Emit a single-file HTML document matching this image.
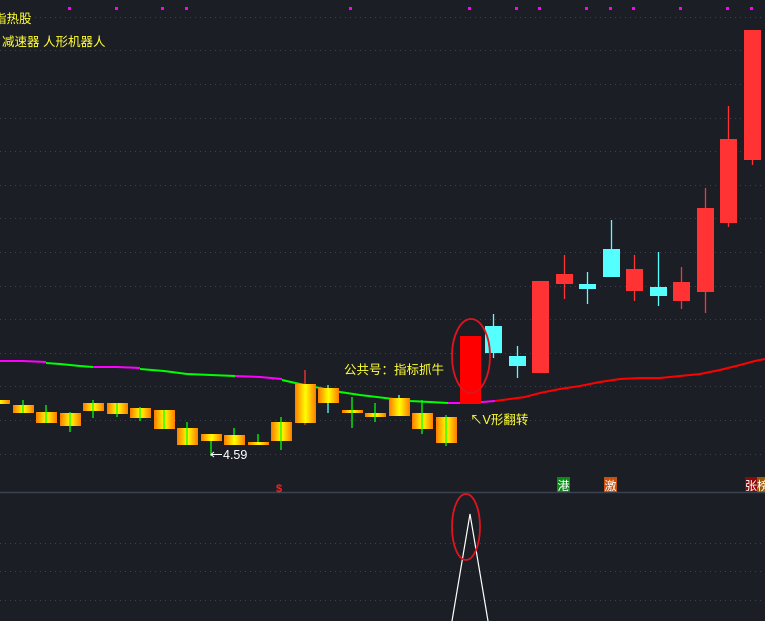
<!DOCTYPE html>
<html><head><meta charset="utf-8"><style>
html,body{margin:0;padding:0;background:#1c1e26;width:765px;height:621px;overflow:hidden}
svg{display:block}
text{font-family:"Liberation Sans","Noto Sans CJK SC",sans-serif}
</style></head><body>
<svg width="765" height="621" viewBox="0 0 765 621" xmlns="http://www.w3.org/2000/svg">
<defs>
<linearGradient id="og" x1="0" x2="1" y1="0" y2="0">
<stop offset="0" stop-color="#ff7a00"/><stop offset="0.5" stop-color="#ffff00"/><stop offset="1" stop-color="#ff7a00"/>
</linearGradient>
</defs>
<rect width="765" height="621" fill="#1c1e26"/>
<g stroke="#3c414c" stroke-width="1" stroke-dasharray="1,4">
<line x1="0" y1="17.5" x2="765" y2="17.5"/><line x1="0" y1="50.5" x2="765" y2="50.5"/>
<line x1="0" y1="84.5" x2="765" y2="84.5"/><line x1="0" y1="118.5" x2="765" y2="118.5"/>
<line x1="0" y1="151.5" x2="765" y2="151.5"/><line x1="0" y1="185.5" x2="765" y2="185.5"/>
<line x1="0" y1="218.5" x2="765" y2="218.5"/><line x1="0" y1="252.5" x2="765" y2="252.5"/>
<line x1="0" y1="286.5" x2="765" y2="286.5"/><line x1="0" y1="319.5" x2="765" y2="319.5"/>
<line x1="0" y1="353.5" x2="765" y2="353.5"/><line x1="0" y1="386.5" x2="765" y2="386.5"/>
<line x1="0" y1="420.5" x2="765" y2="420.5"/><line x1="0" y1="454.5" x2="765" y2="454.5"/>
<line x1="0" y1="543.5" x2="765" y2="543.5"/><line x1="0" y1="571.5" x2="765" y2="571.5"/>
<line x1="0" y1="600.5" x2="765" y2="600.5"/>
</g>
<line x1="0" y1="492.5" x2="765" y2="492.5" stroke="#3a4250" stroke-width="1.5"/>
<g fill="#ff00ff">
<rect x="68" y="7" width="3" height="3"/><rect x="115" y="7" width="3" height="3"/><rect x="161" y="7" width="3" height="3"/><rect x="185" y="7" width="3" height="3"/><rect x="349" y="7" width="3" height="3"/><rect x="468" y="7" width="3" height="3"/><rect x="515" y="7" width="3" height="3"/><rect x="538" y="7" width="3" height="3"/><rect x="585" y="7" width="3" height="3"/><rect x="609" y="7" width="3" height="3"/><rect x="632" y="7" width="3" height="3"/><rect x="679" y="7" width="3" height="3"/><rect x="726" y="7" width="3" height="3"/><rect x="750" y="7" width="3" height="3"/>
</g>
<text x="-6" y="23" font-size="12.5" fill="#ffff33">指热股</text>
<text x="2" y="46" font-size="12.5" fill="#ffff33">减速器 人形机器人</text>
<polyline fill="none" stroke="#ff00ff" stroke-width="2" points="0,361 23,361 46,362"/>
<polyline fill="none" stroke="#00ff00" stroke-width="2" points="46,363 60,364 70,365 80,366 93,367"/>
<polyline fill="none" stroke="#ff00ff" stroke-width="2" points="93,367 117,367 140,368"/>
<polyline fill="none" stroke="#00ff00" stroke-width="2" points="140,369 164,371 187,374 211,375 235,376"/>
<polyline fill="none" stroke="#ff00ff" stroke-width="2" points="235,376 260,377 282,379"/>
<polyline fill="none" stroke="#00ff00" stroke-width="2" points="282,380 300,384 320,388 340,392 360,395 385,398 410,401 430,402 448,403"/>
<polyline fill="none" stroke="#ff00ff" stroke-width="2" points="448,403 470,403 495,401"/>
<polyline fill="none" stroke="#ff0000" stroke-width="2" points="495,401 510,399 525,397 540,393 560,389 580,386 600,382 620,379 640,378 660,378 680,376 700,374 720,370 740,365 755,361 765,359"/>
<g stroke="#00ff00" stroke-width="1.3">
<line x1="46" y1="405" x2="46" y2="423"/><line x1="70" y1="412" x2="70" y2="432"/><line x1="93" y1="400" x2="93" y2="418"/><line x1="117" y1="403" x2="117" y2="417"/><line x1="140" y1="407" x2="140" y2="421"/><line x1="164" y1="410" x2="164" y2="429"/><line x1="187" y1="422" x2="187" y2="445"/><line x1="211" y1="434" x2="211" y2="456"/><line x1="234" y1="428" x2="234" y2="445"/><line x1="258" y1="434" x2="258" y2="445"/><line x1="281" y1="417" x2="281" y2="450"/><line x1="352" y1="397" x2="352" y2="428"/><line x1="375" y1="403" x2="375" y2="422"/><line x1="422" y1="400" x2="422" y2="434"/><line x1="446" y1="415" x2="446" y2="446"/><line x1="23" y1="400" x2="23" y2="413"/>
</g>
<line x1="305" y1="370" x2="305" y2="425" stroke="#ff3333" stroke-width="1.3"/>
<line x1="328" y1="385" x2="328" y2="413" stroke="#55ffff" stroke-width="1.3"/>
<line x1="399" y1="395" x2="399" y2="416" stroke="#55ffff" stroke-width="1.3"/>
<g fill="url(#og)">
<rect x="-11" y="400" width="21" height="4"/>
<rect x="13" y="405" width="21" height="8"/>
<rect x="36" y="412" width="21" height="11"/>
<rect x="60" y="413" width="21" height="13"/>
<rect x="83" y="403" width="21" height="8"/>
<rect x="107" y="403" width="21" height="11"/>
<rect x="130" y="408" width="21" height="10"/>
<rect x="154" y="410" width="21" height="19"/>
<rect x="177" y="428" width="21" height="17"/>
<rect x="201" y="434" width="21" height="7"/>
<rect x="224" y="435" width="21" height="10"/>
<rect x="248" y="442" width="21" height="3"/>
<rect x="271" y="422" width="21" height="19"/>
<rect x="295" y="384" width="21" height="39"/>
<rect x="318" y="388" width="21" height="15"/>
<rect x="342" y="410" width="21" height="3"/>
<rect x="365" y="413" width="21" height="4"/>
<rect x="389" y="398" width="21" height="18"/>
<rect x="412" y="413" width="21" height="16"/>
<rect x="436" y="417" width="21" height="26"/>
</g>
<g stroke="#00ff00" stroke-width="1.3">
<line x1="23" y1="405" x2="23" y2="413"/><line x1="46" y1="412" x2="46" y2="423"/><line x1="70" y1="413" x2="70" y2="426"/><line x1="93" y1="403" x2="93" y2="411"/><line x1="117" y1="403" x2="117" y2="414"/><line x1="140" y1="408" x2="140" y2="418"/><line x1="164" y1="410" x2="164" y2="429"/><line x1="187" y1="428" x2="187" y2="445"/><line x1="281" y1="422" x2="281" y2="441"/><line x1="422" y1="413" x2="422" y2="429"/><line x1="446" y1="417" x2="446" y2="443"/><line x1="352" y1="410" x2="352" y2="413"/><line x1="375" y1="413" x2="375" y2="417"/>
</g>
<rect x="460" y="336" width="21" height="68" fill="#ff0000"/>
<g stroke="#55ffff" stroke-width="1.3">
<line x1="493.5" y1="314" x2="493.5" y2="358"/><line x1="517.5" y1="346" x2="517.5" y2="378"/><line x1="587.5" y1="272" x2="587.5" y2="304"/><line x1="611.5" y1="220" x2="611.5" y2="277"/><line x1="658.5" y1="252" x2="658.5" y2="306"/>
</g>
<g stroke="#ff3333" stroke-width="1.3">
<line x1="564.5" y1="255" x2="564.5" y2="299"/><line x1="634.5" y1="255" x2="634.5" y2="301"/><line x1="681.5" y1="267" x2="681.5" y2="309"/><line x1="705.5" y1="188" x2="705.5" y2="313"/><line x1="728.5" y1="106" x2="728.5" y2="227"/><line x1="752.5" y1="30" x2="752.5" y2="165"/>
</g>
<g fill="#55ffff">
<rect x="485" y="326" width="17" height="27"/><rect x="509" y="356" width="17" height="10"/><rect x="579" y="284" width="17" height="5"/><rect x="603" y="249" width="17" height="28"/><rect x="650" y="287" width="17" height="9"/>
</g>
<g fill="#ff3333">
<rect x="532" y="281" width="17" height="92"/><rect x="556" y="274" width="17" height="10"/><rect x="626" y="269" width="17" height="22"/><rect x="673" y="282" width="17" height="19"/><rect x="697" y="208" width="17" height="84"/><rect x="720" y="139" width="17" height="84"/><rect x="744" y="30" width="17" height="130"/>
</g>
<ellipse cx="471" cy="356" rx="19" ry="37" fill="none" stroke="#e0141e" stroke-width="1.8"/>
<text x="344" y="374" font-size="12.5" fill="#ffff33">公共号：指标抓牛</text>
<text x="470" y="424" font-size="12.5" fill="#ffff33">↖V形翻转</text>
<line x1="211" y1="454.5" x2="222" y2="454.5" stroke="#fff" stroke-width="1"/>
<path d="M214,452 L211,454.5 L214,457" fill="none" stroke="#fff" stroke-width="1"/>
<text x="223" y="459" font-size="12.5" fill="#ffffff">4.59</text>
<text x="276" y="492" font-size="11" fill="#ff2020" font-weight="bold">$</text>
<rect x="557" y="477" width="13" height="15" fill="#0a8a14"/><text x="557.5" y="490" font-size="12" fill="#fff">港</text>
<rect x="604" y="477" width="13" height="15" fill="#c8500a"/><text x="604.5" y="490" font-size="12" fill="#fff">激</text>
<rect x="745" y="477" width="12" height="15" fill="#8a0a0a"/><text x="745" y="490" font-size="12" fill="#fff">张</text>
<rect x="757" y="477" width="8" height="15" fill="#9a5a0a"/><text x="757" y="490" font-size="12" fill="#fff">榜</text>
<polyline fill="none" stroke="#ffffff" stroke-width="1.2" points="452,621 470,514 488,621"/>
<ellipse cx="466" cy="527" rx="14" ry="33" fill="none" stroke="#e0141e" stroke-width="1.8"/>
</svg>
</body></html>
